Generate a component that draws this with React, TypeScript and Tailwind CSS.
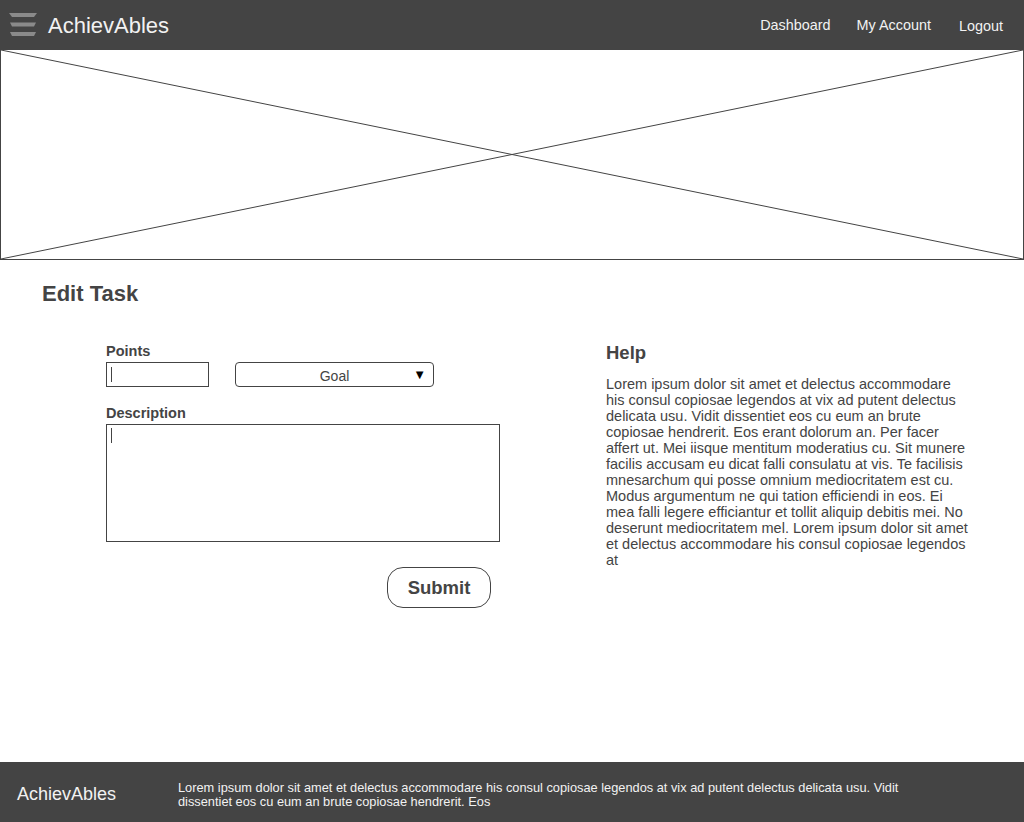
import React from "react";

const helpText =
  "Lorem ipsum dolor sit amet et delectus accommodare his consul copiosae legendos at vix ad putent delectus delicata usu. Vidit dissentiet eos cu eum an brute copiosae hendrerit. Eos erant dolorum an. Per facer affert ut. Mei iisque mentitum moderatius cu. Sit munere facilis accusam eu dicat falli consulatu at vis. Te facilisis mnesarchum qui posse omnium mediocritatem est cu. Modus argumentum ne qui tation efficiendi in eos. Ei mea falli legere efficiantur et tollit aliquip debitis mei. No deserunt mediocritatem mel. Lorem ipsum dolor sit amet et delectus accommodare his consul copiosae legendos at";

const footerText =
  "Lorem ipsum dolor sit amet et delectus accommodare his consul copiosae legendos at vix ad putent delectus delicata usu. Vidit dissentiet eos cu eum an brute copiosae hendrerit. Eos";

const Hamburger = () => (
  <svg width="28" height="24" viewBox="0 0 28 24">
    <polygon points="0,0 28,0 25,4 3,4" fill="#8a8a8a" />
    <polygon points="1,9.5 27,9.5 25,13.5 3,13.5" fill="#8a8a8a" />
    <polygon points="1,19 27,19 25,23 3,23" fill="#8a8a8a" />
  </svg>
);

export default function App() {
  return (
    <div
      className="flex min-h-[822px] flex-col bg-white text-[#444]"
      style={{ fontFamily: '"Liberation Sans", Arial, sans-serif' }}
    >
      <header className="flex h-[49px] items-center bg-[#444] pl-[9px] pr-[21px] text-[#f2f2f2]">
        <Hamburger />
        <span className="ml-[11px] mt-[2px] text-[22px]">AchievAbles</span>
        <nav className="ml-auto mt-[2px] flex items-center text-[14.4px]">
          <a className="mr-[26px]">Dashboard</a>
          <a className="mr-[28px]">My Account</a>
          <a className="mt-[3px]">Logout</a>
        </nav>
      </header>

      <div className="h-[211px] border border-[#444]">
        <svg className="h-full w-full" viewBox="0 0 100 100" preserveAspectRatio="none">
          <line x1="0" y1="0" x2="100" y2="100" stroke="#444" strokeWidth="1" vectorEffect="non-scaling-stroke" />
          <line x1="100" y1="0" x2="0" y2="100" stroke="#444" strokeWidth="1" vectorEffect="non-scaling-stroke" />
        </svg>
      </div>

      <main className="flex-1">
        <h1 className="ml-[42px] mt-[17px] text-[22px] font-bold">Edit Task</h1>

        <div className="mt-[33px] flex">
          <div className="ml-[106px] w-[394px]">
            <label className="block text-[14.5px] font-bold leading-[16px]">Points</label>
            <div className="mt-[3px] flex items-center">
              <div className="flex h-[25px] w-[103px] items-center border border-[#444] pl-[4px]">
                <div className="h-[15px] w-px bg-[#444]" />
              </div>
              <div className="relative ml-[26px] flex h-[25px] w-[199px] items-center justify-center rounded-[4px] border border-[#444] text-[14px]">
                <span className="mt-[4px]">Goal</span>
                <span className="absolute right-[7px] top-[2px] text-[13px] text-black">▼</span>
              </div>
            </div>

            <label className="mt-[18px] block text-[14.5px] font-bold leading-[16px]">Description</label>
            <div className="mt-[3px] h-[118px] w-[394px] border border-[#444] pl-[4px] pt-[3px]">
              <div className="h-[15px] w-px bg-[#444]" />
            </div>

            <div className="mt-[25px] flex">
              <button className="ml-[281px] h-[41px] w-[104px] rounded-[16px] border border-[#444] text-[18.5px] font-bold">
                Submit
              </button>
            </div>
          </div>

          <div className="ml-[106px] w-[366px]">
            <h2 className="text-[18.5px] font-bold leading-[20px]">Help</h2>
            <p className="mt-[13px] text-[14.5px] leading-[16px]">{helpText}</p>
          </div>
        </div>
      </main>

      <footer className="flex h-[60px] items-center bg-[#444] text-[#f2f2f2]">
        <span className="ml-[17px] mt-[4px] w-[161px] text-[18px]">AchievAbles</span>
        <p className="mt-[5px] w-[740px] text-[12.8px] leading-[14px]">{footerText}</p>
      </footer>
    </div>
  );
}
